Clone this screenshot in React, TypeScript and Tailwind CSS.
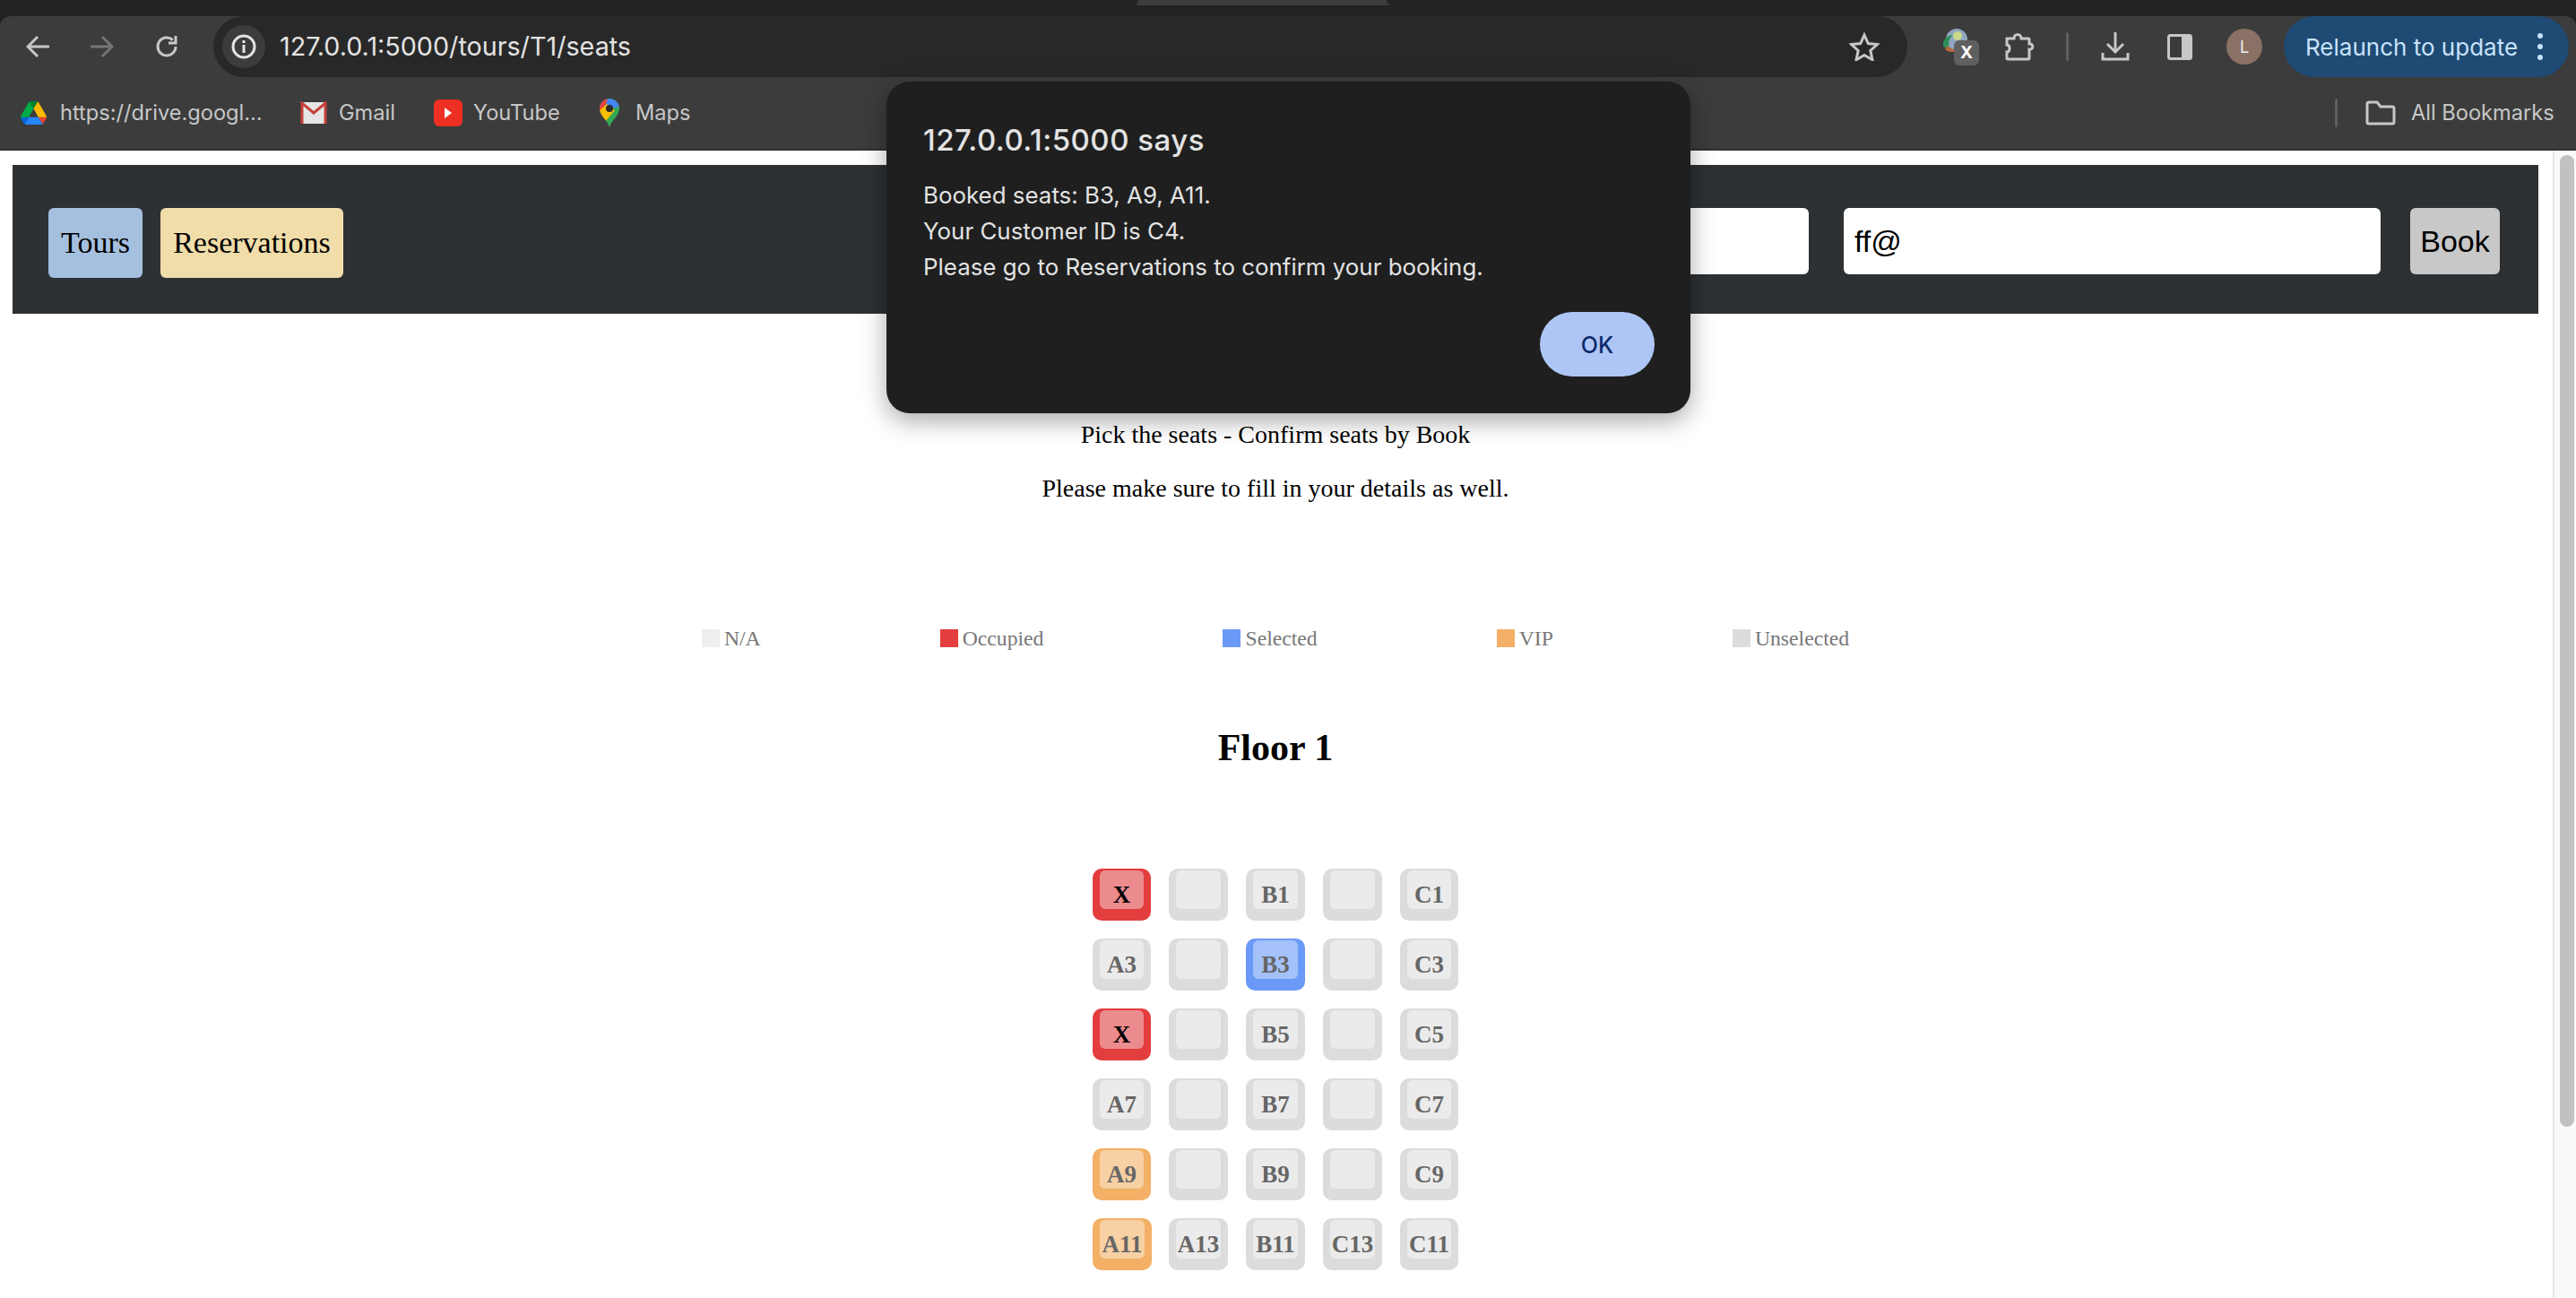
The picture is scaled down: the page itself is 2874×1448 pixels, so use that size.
const SEAT_STYLES: Record<string, { outer: string; inner: string; text: string }> = {
  free: { outer: "bg-[#dcdcdc]", inner: "bg-[#ebebeb]", text: "text-[#666666]" },
  occupied: { outer: "bg-[#e33d3e]", inner: "bg-[#ec8b8e]", text: "text-black" },
  selected: { outer: "bg-[#6b99f8]", inner: "bg-[#a4c1fa]", text: "text-[#666666]" },
  vip: { outer: "bg-[#f3b066]", inner: "bg-[#f7d0a3]", text: "text-[#666666]" },
};

const SEATS: { label: string; kind: string }[] = [
  { label: "X", kind: "occupied" },
  { label: "", kind: "free" },
  { label: "B1", kind: "free" },
  { label: "", kind: "free" },
  { label: "C1", kind: "free" },
  { label: "A3", kind: "free" },
  { label: "", kind: "free" },
  { label: "B3", kind: "selected" },
  { label: "", kind: "free" },
  { label: "C3", kind: "free" },
  { label: "X", kind: "occupied" },
  { label: "", kind: "free" },
  { label: "B5", kind: "free" },
  { label: "", kind: "free" },
  { label: "C5", kind: "free" },
  { label: "A7", kind: "free" },
  { label: "", kind: "free" },
  { label: "B7", kind: "free" },
  { label: "", kind: "free" },
  { label: "C7", kind: "free" },
  { label: "A9", kind: "vip" },
  { label: "", kind: "free" },
  { label: "B9", kind: "free" },
  { label: "", kind: "free" },
  { label: "C9", kind: "free" },
  { label: "A11", kind: "vip" },
  { label: "A13", kind: "free" },
  { label: "B11", kind: "free" },
  { label: "C13", kind: "free" },
  { label: "C11", kind: "free" },
];

const LEGEND = [
  { label: "N/A", color: "bg-[#eeeeee]" },
  { label: "Occupied", color: "bg-[#e33d3e]" },
  { label: "Selected", color: "bg-[#6b99f8]" },
  { label: "VIP", color: "bg-[#f3b066]" },
  { label: "Unselected", color: "bg-[#dcdcdc]" },
];

function Seat({ label, kind }: { label: string; kind: string }) {
  const s = SEAT_STYLES[kind];
  return (
    <div
      className={`relative h-[58px] rounded-[10px] flex items-center justify-center ${s.outer} ${
        label === "A11" ? "w-[66px]" : ""
      }`}
    >
      <div className={`absolute left-2 right-2 top-[2px] h-[43px] rounded-[6px] ${s.inner}`} />
      <span className={`relative font-bold text-[27px] leading-none ${s.text}`}>{label}</span>
    </div>
  );
}

function DriveIcon() {
  return (
    <svg width="29" height="26" viewBox="0 0 87.3 78">
      <path d="m6.6 66.85 3.85 6.65c.8 1.4 1.95 2.5 3.3 3.3l13.75-23.8h-27.5c0 1.55.4 3.1 1.2 4.5z" fill="#0066da" />
      <path d="m43.65 25-13.75-23.8c-1.35.8-2.5 1.9-3.3 3.3l-25.4 44a9.06 9.06 0 0 0 -1.2 4.5h27.5z" fill="#00ac47" />
      <path d="m73.55 76.8c1.35-.8 2.5-1.9 3.3-3.3l1.6-2.75 7.65-13.25c.8-1.4 1.2-2.95 1.2-4.5h-27.502l5.852 11.5z" fill="#ea4335" />
      <path d="m43.65 25 13.75-23.8c-1.35-.8-2.9-1.2-4.5-1.2h-18.5c-1.6 0-3.15.45-4.5 1.2z" fill="#00832d" />
      <path d="m59.8 53h-32.3l-13.75 23.8c1.35.8 2.9 1.2 4.5 1.2h50.8c1.6 0 3.15-.45 4.5-1.2z" fill="#2684fc" />
      <path d="m73.4 26.5-12.7-22c-.8-1.4-1.95-2.5-3.3-3.3l-13.75 23.8 16.15 28h27.45c0-1.55-.4-3.1-1.2-4.5z" fill="#ffba00" />
    </svg>
  );
}

function GmailIcon() {
  return (
    <svg width="30" height="26" viewBox="0 0 30 26">
      <rect x="1" y="1" width="28" height="24" fill="#e6e6e6" />
      <path d="M2 25V2l13 11L28 2v23" fill="none" stroke="#c5403a" strokeWidth="3" />
    </svg>
  );
}

function YouTubeIcon() {
  return (
    <svg width="32" height="30" viewBox="0 0 32 30">
      <rect width="32" height="30" rx="6" fill="#ee3024" />
      <path d="M12 9l8 6-8 6z" fill="#ffffff" />
    </svg>
  );
}

function MapsIcon() {
  return (
    <svg width="22" height="32" viewBox="0 0 22 32">
      <clipPath id="pin">
        <path d="M11 0C5 0 0 5 0 11c0 8 8 12 11 21 3-9 11-13 11-21C22 5 17 0 11 0z" />
      </clipPath>
      <g clipPath="url(#pin)">
        <rect width="22" height="32" fill="#34a853" />
        <path d="M0 0h22v9L0 14z" fill="#4285f4" />
        <path d="M0 0h9l-2 6-7 8z" fill="#ea4335" />
        <path d="M0 13l8-7 9 7L6 26 0 20z" fill="#fbbc04" />
      </g>
      <circle cx="11" cy="11" r="4" fill="#2b2b2b" />
    </svg>
  );
}

function Toolbar() {
  return (
    <div className="flex items-center h-[68px] mt-3">
      <div className="w-[72px] ml-[6px] flex justify-center">
        <svg width="26" height="26" viewBox="0 0 26 26" fill="none" stroke="#c7c7c7" strokeWidth="3">
          <path d="M13 2L2 13l11 11M2 13h24" />
        </svg>
      </div>
      <div className="w-[72px] flex justify-center">
        <svg width="26" height="26" viewBox="0 0 26 26" fill="none" stroke="#757575" strokeWidth="3">
          <path d="M13 2l11 11-11 11M24 13H0" />
        </svg>
      </div>
      <div className="w-[72px] flex justify-center">
        <svg width="26" height="26" viewBox="0 0 26 26" fill="none" stroke="#c7c7c7" strokeWidth="3">
          <path d="M23 13a10 10 0 1 1-3.2-7.4" />
          <path d="M23 1v8h-8" />
        </svg>
      </div>
      <div className="ml-4 w-[1890px] h-[68px] rounded-full bg-[#282828] flex items-center pl-[10px] pr-[31px]">
        <div className="w-12 h-12 rounded-full bg-[#3c3c3c] flex items-center justify-center">
          <svg width="28" height="28" viewBox="0 0 28 28" fill="none" stroke="#e3e3e3" strokeWidth="3">
            <circle cx="14" cy="14" r="12" />
            <path d="M14 12v9M14 7v3" />
          </svg>
        </div>
        <span className="ml-4 text-[28.7px] text-[#e3e3e3] flex-1">127.0.0.1:5000/tours/T1/seats</span>
        <svg width="34" height="32" viewBox="0 0 34 32" fill="none" stroke="#c7c7c7" strokeWidth="3">
          <path d="M17 3l4.3 9.6 10.2 1-7.7 6.9 2.2 10.2L17 25.4 8 30.7l2.2-10.2-7.7-6.9 10.2-1z" />
        </svg>
      </div>
      <div className="relative ml-[37px] w-[43px] h-[42px]">
        <svg width="32" height="30" viewBox="0 0 32 30" className="absolute left-0 top-0">
          <circle cx="18" cy="13" r="12" fill="#8fa7c0" />
          <circle cx="19" cy="9" r="5" fill="#c9d88a" />
          <path d="M3 21C2 13 8 8 14 8c-4 3-6 8-4 16z" fill="#2f8f5a" />
          <path d="M5 24c4 4 12 4 17 0-6 1-11 0-14-4z" fill="#b9683c" />
        </svg>
        <div className="absolute right-0 bottom-0 w-7 h-7 rounded-[6px] bg-[#5f5f5f] flex items-center justify-center text-[19px] font-bold text-white">
          X
        </div>
      </div>
      <svg className="ml-[28px]" width="34" height="34" viewBox="0 0 34 34" fill="none" stroke="#c7c7c7" strokeWidth="3">
        <path d="M3 8h8c0-6 8-6 8 0h8a1 1 0 0 1 1 1v5c5-1 5 7 0 6v10a1 1 0 0 1-1 1H4a1 1 0 0 1-1-1v-7c4 0 4-8 0-8z" />
      </svg>
      <div className="ml-[35px] w-[3px] h-8 bg-[#5f5f5f] rounded-full" />
      <svg className="ml-9" width="32" height="32" viewBox="0 0 32 32" fill="none" stroke="#c7c7c7" strokeWidth="3">
        <path d="M16 0v21M7 13l9 9 9-9M2 23v7h28v-7" />
      </svg>
      <svg className="ml-[42px]" width="28" height="29" viewBox="0 0 28 29">
        <rect x="1.5" y="1.5" width="25" height="26" rx="2" fill="none" stroke="#c7c7c7" strokeWidth="3" />
        <rect x="16" y="1.5" width="10.5" height="26" fill="#c7c7c7" />
      </svg>
      <div className="ml-[38px] w-10 h-10 rounded-full bg-[#8a7165] flex items-center justify-center text-[18px] text-[#f0f0f0]">
        L
      </div>
      <div className="ml-6 w-[318px] h-[68px] rounded-full bg-[#1f4a73] flex items-center pl-6 text-[#c7e3fb] text-[26px]">
        <span className="w-[259px] whitespace-nowrap">Relaunch to update</span>
        <div className="flex flex-col gap-[6px]">
          <div className="w-[6px] h-[6px] rounded-full bg-[#c7e3fb]" />
          <div className="w-[6px] h-[6px] rounded-full bg-[#c7e3fb]" />
          <div className="w-[6px] h-[6px] rounded-full bg-[#c7e3fb]" />
        </div>
      </div>
    </div>
  );
}

function BookmarksBar() {
  return (
    <div className="flex items-center h-20 text-[23.6px] text-[#c7c7c7]">
      <div className="ml-[23px] w-[29px] flex"><DriveIcon /></div>
      <span className="ml-[15px] w-[225px] whitespace-nowrap">https://drive.googl...</span>
      <div className="ml-[43px] flex"><GmailIcon /></div>
      <span className="ml-[13px] w-[63px]">Gmail</span>
      <div className="ml-[43px] flex"><YouTubeIcon /></div>
      <span className="ml-3 w-[94px]">YouTube</span>
      <div className="ml-[47px] flex"><MapsIcon /></div>
      <span className="ml-[18px] w-[59px]">Maps</span>
      <div className="ml-[1837px] w-[3px] h-8 bg-[#5f5f5f] rounded-full" />
      <svg className="ml-[31px]" width="34" height="28" viewBox="0 0 34 28" fill="none" stroke="#c7c7c7" strokeWidth="3">
        <path d="M2 4a2 2 0 0 1 2-2h9l4 5h13a2 2 0 0 1 2 2v15a2 2 0 0 1-2 2H4a2 2 0 0 1-2-2z" />
      </svg>
      <span className="ml-[17px] whitespace-nowrap">All Bookmarks</span>
    </div>
  );
}

function AlertDialog() {
  return (
    <div className="absolute left-[989px] top-[91px] w-[897px] h-[370px] rounded-[26px] bg-[#1f1f1f] shadow-[0_8px_28px_rgba(0,0,0,0.35)] text-[#e3e3e3] px-[41px] pt-[47px] font-['Inter',sans-serif]">
      <div className="text-[33px] leading-9 font-medium tracking-[0.5px]">127.0.0.1:5000 says</div>
      <div className="mt-[24px] text-[25.9px] leading-[40px]">
        <div>Booked seats: B3, A9, A11.</div>
        <div>Your Customer ID is C4.</div>
        <div>Please go to Reservations to confirm your booking.</div>
      </div>
      <div className="flex justify-end mt-[30px] -mr-[1px]">
        <div className="w-[128px] h-[72px] pt-[3px] rounded-full bg-[#aec6f5] flex items-center justify-center text-[25px] font-medium text-[#0b2a6b]">
          OK
        </div>
      </div>
    </div>
  );
}

export default function App() {
  return (
    <div className="relative h-screen overflow-hidden flex flex-col bg-white font-['Liberation_Serif',serif]">
      <header className="bg-[#202322] font-['Inter',sans-serif]">
        <div className="flex h-[6px] bg-[#3c3c3c]">
          <div className="w-[1270px] bg-[#202322] rounded-br-[10px]" />
          <div className="flex-1" />
          <div className="w-[1327px] bg-[#202322] rounded-bl-[10px]" />
        </div>
        <div className="bg-[#3c3c3c] rounded-t-[12px]">
          <Toolbar />
          <BookmarksBar />
        </div>
        <div className="h-[2px] bg-[#2f2f2f]" />
      </header>

      <div className="flex-1 flex min-h-0">
        <main className="flex-1 pl-[14px] pr-4 pt-4">
          <nav className="h-[166px] bg-[#2d3134] flex items-start justify-between pt-[48px] pl-[40px] pr-[43px]">
            <div className="flex gap-5 text-[34px] text-black">
              <div className="h-[78px] w-[105px] pb-[2px] rounded-[6px] bg-[#a5c0df] flex items-center justify-center">Tours</div>
              <div className="h-[78px] w-[204px] pb-[2px] rounded-[6px] bg-[#f0dda9] flex items-center justify-center">Reservations</div>
            </div>
            <div className="flex font-['Liberation_Sans',sans-serif] text-[34px] text-black">
              <div className="h-[74px] w-[600px] rounded-[6px] bg-white" />
              <div className="ml-[39px] h-[74px] w-[599px] rounded-[6px] bg-white flex items-center pl-3">ff@</div>
              <div className="ml-[33px] h-[74px] w-[100px] rounded-[6px] bg-[#c8c8c8] flex items-center justify-center">Book</div>
            </div>
          </nav>

          <p className="mt-[119px] text-center text-[28px] leading-8 text-black">Pick the seats - Confirm seats by Book</p>
          <p className="mt-7 text-center text-[28px] leading-8 text-black">Please make sure to fill in your details as well.</p>

          <div className="mt-[141px] flex justify-center gap-[200px]">
            {LEGEND.map((item) => (
              <div key={item.label} className="flex items-center h-5">
                <div className={`w-5 h-5 ${item.color}`} />
                <span className="ml-[5px] text-[23.7px] leading-5 text-[#777777]">{item.label}</span>
              </div>
            ))}
          </div>

          <h2 className="mt-[87px] h-[50px] flex items-center justify-center font-bold text-[42px] text-black">Floor 1</h2>

          <div className="mt-[110px] mx-auto w-[408px] grid grid-cols-[65px_66px_66px_66px_65px] gap-5">
            {SEATS.map((seat, i) => (
              <Seat key={i} label={seat.label} kind={seat.kind} />
            ))}
          </div>
        </main>

        <div className="w-[26px] border-l-2 border-[#e6e6e6] bg-[#fafafa] pt-[5px] pl-[6px] pr-[2px]">
          <div className="h-[1084px] rounded-full bg-[#c1c1c1]" />
        </div>
      </div>

      <AlertDialog />
    </div>
  );
}
